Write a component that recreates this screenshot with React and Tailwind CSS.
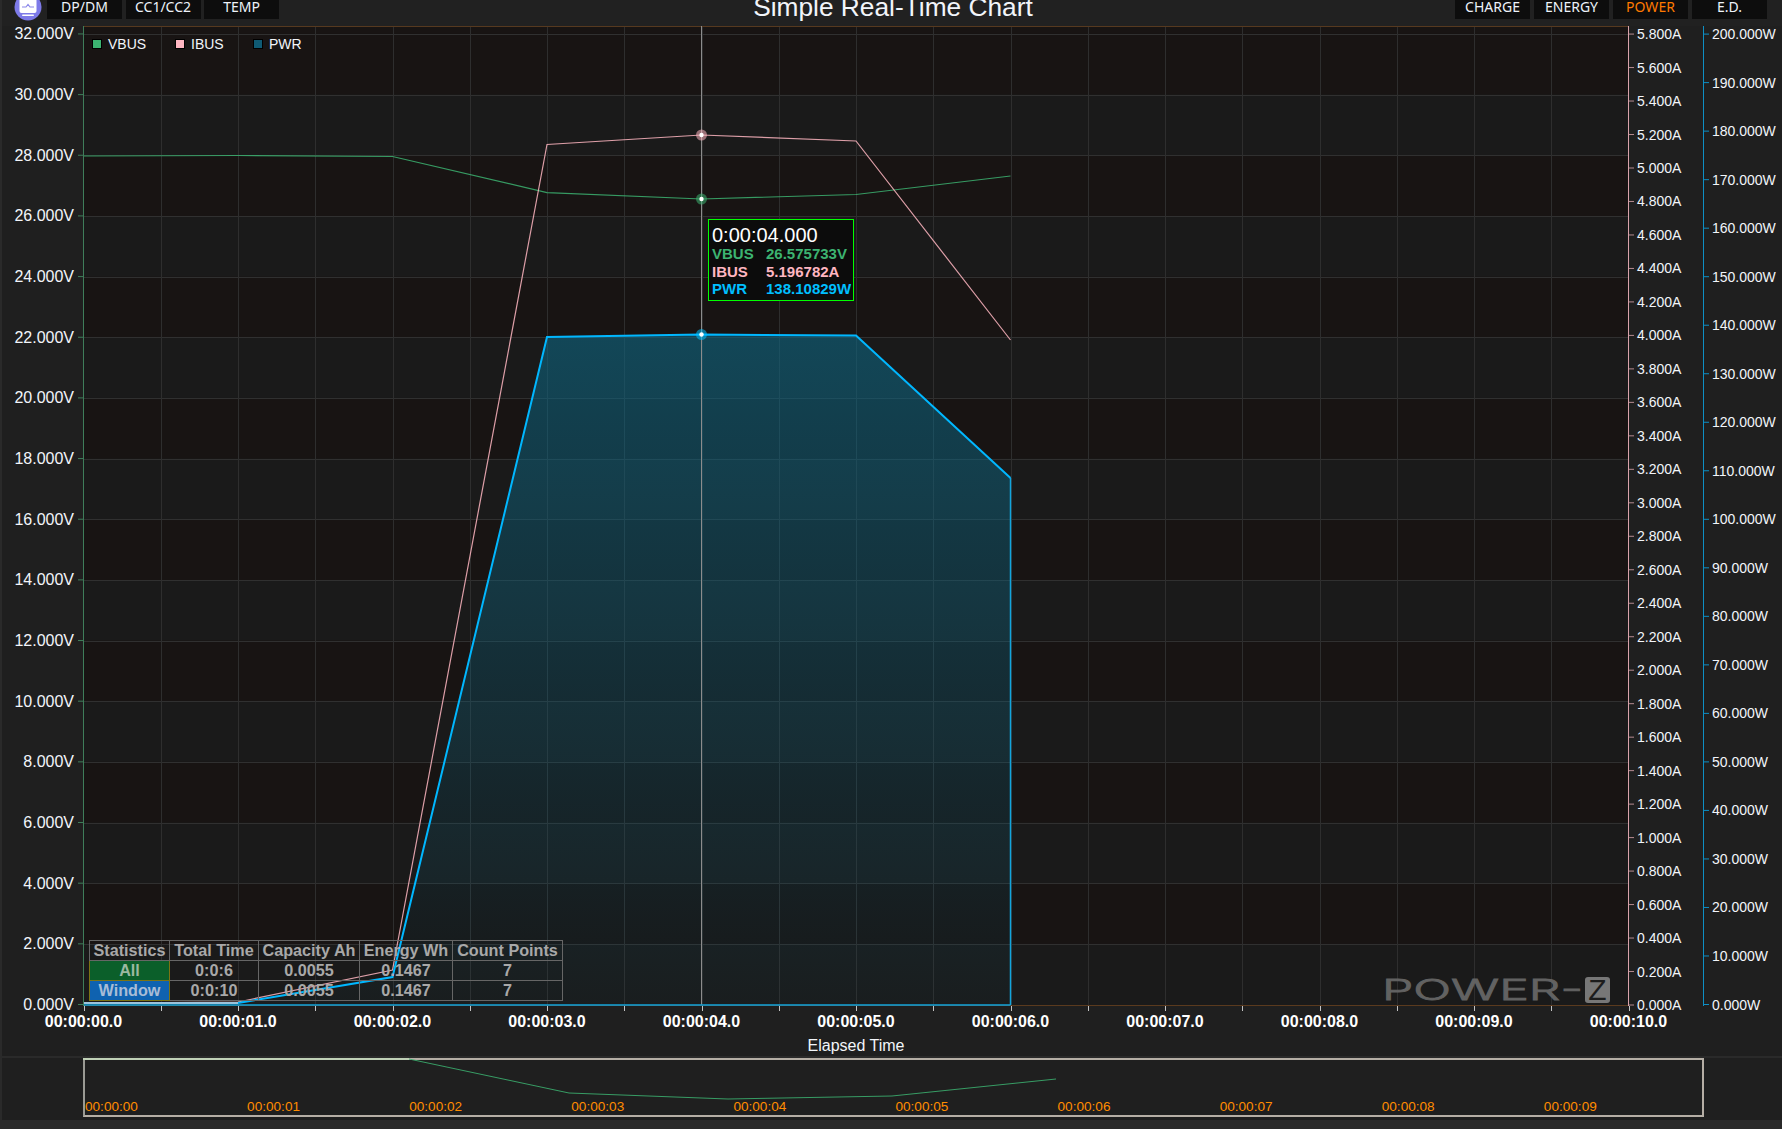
import React from 'react';

const X0 = 83.5;
const xAt = (t) => X0 + 154.5 * t;
const vY = (i) => 1004.5 - i * 60.66;
const aY = (i) => 1005 - i * 33.48;
const wY = (i) => 1004.5 - i * 48.52;

const pts = (ys) => ys.map((y, i) => `${xAt(i)},${y}`).join(' ');
const VBUS = [156, 155.5, 156.5, 192.6, 199, 194.5, 176];
const IBUS = [1003, 1002, 970, 144.5, 135, 141, 340];
const PWR = [1003, 1003, 977, 337, 334.5, 335.5, 478];

const pad2 = (n) => String(n).padStart(2, '0');

function Chart() {
  const vTicks = Array.from({ length: 17 }, (_, i) => i);
  const aTicks = Array.from({ length: 30 }, (_, i) => i);
  const wTicks = Array.from({ length: 21 }, (_, i) => i);
  const half = Array.from({ length: 21 }, (_, i) => i);
  const marks = [
    [135, '#ffb6c1'],
    [199, '#3cb371'],
    [334.5, '#00bfff'],
  ];

  return (
    <svg className="block" width="1780" height="1030" viewBox="2 26 1780 1030">
      <defs>
        <linearGradient id="pwrFill" x1="0" y1="334" x2="0" y2="1005" gradientUnits="userSpaceOnUse">
          <stop offset="0" stopColor="#0c6a88" stopOpacity="0.56" />
          <stop offset="1" stopColor="#0c6a88" stopOpacity="0.04" />
        </linearGradient>
      </defs>

      {/* plot bands */}
      <rect x={X0} y="26" width="1545" height="979" fill="#1a1a1a" />
      <rect x={X0} y="26" width="1545" height="8" fill="#181413" />
      {vTicks.slice(0, 16).filter((i) => i % 2 === 1).map((i) => (
        <rect key={i} x={X0} y={vY(i + 1)} width="1545" height="60.66" fill="#181413" />
      ))}

      {/* grid */}
      {vTicks.map((i) => (
        <line key={i} x1={X0} x2="1628" y1={Math.round(vY(i)) + 0.5} y2={Math.round(vY(i)) + 0.5} stroke="#303030" />
      ))}
      {half.slice(1, 20).map((i) => (
        <line key={i} x1={Math.round(X0 + i * 77.25) + 0.5} x2={Math.round(X0 + i * 77.25) + 0.5} y1="26" y2="1005" stroke="#2e2e2e" />
      ))}
      <line x1={X0} x2="1628" y1="26.5" y2="26.5" stroke="#56391f" />
      <line x1={X0} x2="1628" y1="1005.5" y2="1005.5" stroke="#5a3a1e" />

      {/* power area and series */}
      <polygon points={`${pts(PWR)} ${xAt(6)},1005 ${X0},1005`} fill="url(#pwrFill)" />
      <line x1={xAt(4)} x2={xAt(4)} y1="26" y2="1005" stroke="#8c8c8c" />
      <polyline points={pts(VBUS)} fill="none" stroke="#3cb371" strokeOpacity="0.85" strokeWidth="1.2" />
      <polyline points={pts(IBUS)} fill="none" stroke="#ffb6c1" strokeOpacity="0.85" strokeWidth="1.2" />
      <polyline points={pts(PWR)} fill="none" stroke="#00b7ff" strokeWidth="2" />
      <line x1={xAt(6)} x2={xAt(6)} y1="478" y2="1005" stroke="#12a4dc" strokeWidth="1.5" />
      <line x1={X0} x2={xAt(6)} y1="1005" y2="1005" stroke="#12a4dc" strokeWidth="1.5" />
      <line x1={X0} x2={xAt(1)} y1="1003" y2="1003" stroke="#9cc4dc" strokeWidth="2" />

      {marks.map(([y, c]) => (
        <g key={y}>
          <circle cx={xAt(4)} cy={y} r="5.5" fill={c} fillOpacity="0.55" />
          <circle cx={xAt(4)} cy={y} r="2.2" fill="#ffffff" />
        </g>
      ))}

      {/* left axis */}
      <line x1={X0} x2={X0} y1="26" y2="1006" stroke="#3f7d5a" />
      {vTicks.map((i) => (
        <g key={i}>
          <line x1="78" x2="83" y1={vY(i)} y2={vY(i)} stroke="#3f7d5a" />
          <text x="74" y={vY(i) + 5.5} textAnchor="end" className="text-[16px] fill-[#f2f5fa]">
            {(i * 2).toFixed(3)}V
          </text>
        </g>
      ))}

      {/* current axis */}
      <line x1="1628.5" x2="1628.5" y1="26" y2="1006" stroke="#d9a3ab" />
      {aTicks.map((i) => (
        <g key={i}>
          <line x1="1629" x2="1634" y1={aY(i)} y2={aY(i)} stroke="#b58a90" />
          <text x="1637" y={aY(i) + 5} className="text-[14px] fill-[#f2f5fa]">
            {(i * 0.2).toFixed(3)}A
          </text>
        </g>
      ))}

      {/* power axis */}
      <line x1="1703.5" x2="1703.5" y1="26" y2="1006" stroke="#0e8fc4" />
      {wTicks.map((i) => (
        <g key={i}>
          <line x1="1704" x2="1709" y1={wY(i)} y2={wY(i)} stroke="#0e8fc4" />
          <text x="1712" y={wY(i) + 5} className="text-[14px] fill-[#f2f5fa]">
            {(i * 10).toFixed(3)}W
          </text>
        </g>
      ))}

      {/* time axis */}
      {half.map((i) => (
        <line key={i} x1={Math.round(X0 + i * 77.25) + 0.5} x2={Math.round(X0 + i * 77.25) + 0.5} y1="1006" y2="1011" stroke="#c4c4c4" />
      ))}
      {half.filter((i) => i % 2 === 0).map((i) => (
        <text key={i} x={X0 + i * 77.25} y="1027" textAnchor="middle" className="text-[16px] font-bold fill-white">
          00:00:{pad2(i / 2)}.0
        </text>
      ))}
      <text x="856" y="1051" textAnchor="middle" className="text-[16px] fill-[#f2f5fa]">Elapsed Time</text>

      {/* watermark */}
      <g>
        <text x="1382" y="1000" textLength="201" lengthAdjust="spacingAndGlyphs" stroke="#626262" strokeWidth="0.8" className="text-[28px] fill-[#626262] font-['Inter'] font-light">
          POWER-
        </text>
        <rect x="1585" y="977" width="25" height="26" rx="3" fill="#777777" />
        <text x="1597.5" y="1000" textAnchor="middle" className="text-[30px] fill-[#1c1c1c]">Z</text>
      </g>
    </svg>
  );
}

function Legend() {
  const items = [
    ['VBUS', 'bg-[#3cb371]', 'w-[83px]'],
    ['IBUS', 'bg-[#ffb6c1]', 'w-[78px]'],
    ['PWR', 'bg-[#0f5a73]', 'w-[60px]'],
  ];
  return (
    <div className="absolute left-[90px] top-[11px] flex items-center text-[14px] leading-[14px] text-[#f2f5fa]">
      {items.map(([name, color, w]) => (
        <div key={name} className={`flex items-center gap-[6px] ${w}`}>
          <span className={`w-[10px] h-[10px] border border-black ${color}`} />
          <span>{name}</span>
        </div>
      ))}
    </div>
  );
}

function Tooltip() {
  const rows = [
    ['VBUS', '26.575733V', 'text-[#3cb371]'],
    ['IBUS', '5.196782A', 'text-[#ffb6c1]'],
    ['PWR', '138.10829W', 'text-[#00bfff]'],
  ];
  return (
    <div className="absolute left-[706px] top-[193px] w-[146px] h-[82px] border border-[#00ff00] bg-[#0c0c0c] pl-[3px] pt-[5px]">
      <div className="text-[20px] leading-[20px] text-white">0:00:04.000</div>
      {rows.map(([name, value, color]) => (
        <div key={name} className={`flex text-[15px] font-bold leading-[17.5px] ${color}`}>
          <span className="w-[54px]">{name}</span>
          <span>{value}</span>
        </div>
      ))}
    </div>
  );
}

function StatsTable() {
  const cell = 'border border-[#666666] p-0 text-center';
  return (
    <table className="absolute left-[87px] top-[914px] w-[473px] h-[61px] table-fixed border-collapse text-[16.2px] font-bold leading-[19px] text-[#a8a8a8]">
      <colgroup>
        <col className="w-[80px]" />
        <col className="w-[89px]" />
        <col className="w-[101px]" />
        <col className="w-[93px]" />
        <col className="w-[110px]" />
      </colgroup>
      <tbody>
        <tr>
          <td className={cell}>Statistics</td>
          <td className={cell}>Total Time</td>
          <td className={cell}>Capacity Ah</td>
          <td className={cell}>Energy Wh</td>
          <td className={cell}>Count Points</td>
        </tr>
        <tr>
          <td className="border border-[#7c7414] p-0 text-center bg-[#0b5f2a] text-[#9cb8a0]">All</td>
          <td className={cell}>0:0:6</td>
          <td className={cell}>0.0055</td>
          <td className={cell}>0.1467</td>
          <td className={cell}>7</td>
        </tr>
        <tr>
          <td className="border border-[#7c7414] p-0 text-center bg-[#0f62b0] text-[#a8bcd6]">Window</td>
          <td className={cell}>0:0:10</td>
          <td className={cell}>0.0055</td>
          <td className={cell}>0.1467</td>
          <td className={cell}>7</td>
        </tr>
      </tbody>
    </table>
  );
}

function Navigator() {
  return (
    <div className="h-[62px] bg-[#1f1f1f] pl-[81px]">
      <div className="relative w-[1621px] h-[59px] border-2 border-[#b5aea5] border-l-[#9a9a94]">
        <svg className="absolute left-[-2px] top-[-2px]" width="1621" height="59" viewBox="83 1058 1621 59">
          <line x1="83" x2="409" y1="1059" y2="1059" stroke="#bfd0b6" strokeWidth="2" />
          <polyline points="409,1059 569,1093 728,1099 892,1096 1056,1079" fill="none" stroke="#3cb371" strokeOpacity="0.85" />
        </svg>
        <div className="absolute left-0 bottom-0 flex text-[13.6px] leading-[16px] text-[#ff8c00]">
          {Array.from({ length: 10 }, (_, i) => (
            <span key={i} className="w-[162.1px]">00:00:{pad2(i)}</span>
          ))}
        </div>
      </div>
    </div>
  );
}

function TabButton({ children, active }) {
  return (
    <div className={`w-[75px] h-[19px] bg-[#0d0d0d] flex items-center justify-center font-['Noto_Sans'] text-[14px] leading-[14px] pb-[5px] ${active ? 'text-[#ff7a00]' : 'text-[#eef3fa]'}`}>
      {children}
    </div>
  );
}

export default function App() {
  return (
    <div className="w-[1782px] h-[1129px] overflow-hidden bg-[#2a2a2a] pl-[2px] font-['Liberation_Sans',sans-serif]">
      <div className="h-[26px] bg-[#212121] grid grid-cols-[1fr_auto_1fr] items-start">
        <div className="flex items-start pl-[12px] gap-[3.5px]">
          <svg width="29" height="21" viewBox="0 0 29 21" className="mr-[0.5px]">
            <circle cx="14" cy="7" r="13.5" fill="#7d7ae8" />
            <rect x="5.5" y="-3" width="17" height="16" rx="2" fill="#ffffff" />
            <path d="M8 7 L12 7 L14 4.5 L16 7 L20 7" fill="none" stroke="#8b88ea" strokeWidth="1.2" />
            <rect x="8" y="14.5" width="12" height="1.6" rx="0.8" fill="#ffffff" />
          </svg>
          <TabButton>DP/DM</TabButton>
          <TabButton>CC1/CC2</TabButton>
          <TabButton>TEMP</TabButton>
        </div>
        <div className="ml-[2px] text-[26.3px] leading-[14px] text-[#f2f5fa]">Simple Real-Time Chart</div>
        <div className="flex items-start justify-end gap-[4px] pr-[15px]">
          <TabButton>CHARGE</TabButton>
          <TabButton>ENERGY</TabButton>
          <TabButton active>POWER</TabButton>
          <TabButton>E.D.</TabButton>
        </div>
      </div>

      <div className="relative h-[1030px] bg-[#1f1f1f]">
        <Chart />
        <Legend />
        <StatsTable />
        <Tooltip />
      </div>

      <div className="h-[2px]" />
      <Navigator />
    </div>
  );
}
